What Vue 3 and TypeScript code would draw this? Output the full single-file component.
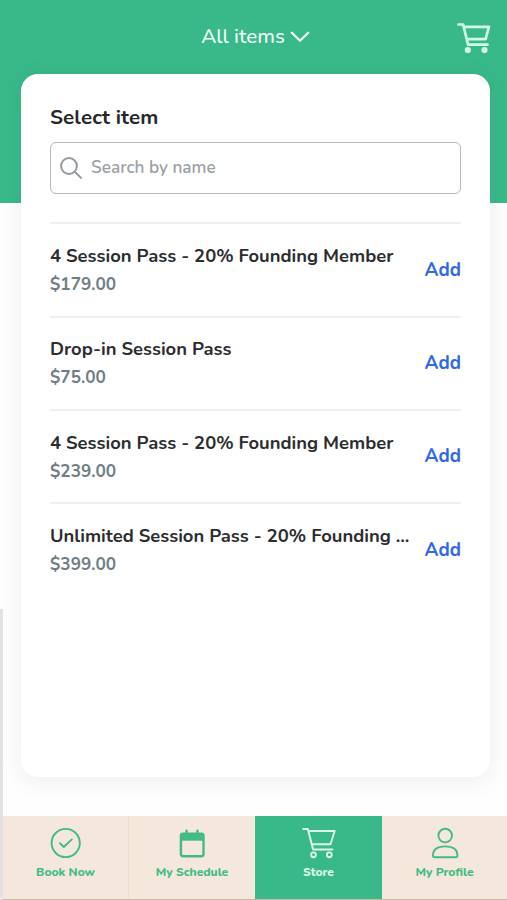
<script setup lang="ts">
import { ref, computed } from 'vue'

interface Item {
  id: number
  name: string
  price: number
}

type TabId = 'book' | 'schedule' | 'store' | 'profile'

const query = ref('')
const activeTab = ref<TabId>('store')

const items: Item[] = [
  { id: 1, name: '4 Session Pass - 20% Founding Member', price: 179 },
  { id: 2, name: 'Drop-in Session Pass', price: 75 },
  { id: 3, name: '4 Session Pass - 20% Founding Member', price: 239 },
  { id: 4, name: 'Unlimited Session Pass - 20% Founding Member', price: 399 },
]

const MAX_NAME = 38

function shorten(name: string): string {
  return name.length > MAX_NAME ? name.slice(0, MAX_NAME) + '...' : name
}

const tabs: { id: TabId; label: string }[] = [
  { id: 'book', label: 'Book Now' },
  { id: 'schedule', label: 'My Schedule' },
  { id: 'store', label: 'Store' },
  { id: 'profile', label: 'My Profile' },
]

const visibleItems = computed(() =>
  items.filter((i) => i.name.toLowerCase().includes(query.value.toLowerCase())),
)
</script>

<template>
  <div class="screen">
    <header class="header">
      <button class="filter">
        <span>All items</span>
        <svg class="chevron" viewBox="0 0 20 12">
          <path d="M1.8 1.8l8.2 8 8.2-8" />
        </svg>
      </button>
      <button class="cart" aria-label="Cart">
        <svg viewBox="0 0 34 32">
          <path d="M1.5 2.5h4.6l5 20.2h19.4M6.9 4.9h25L28.6 17.2H9.8" />
          <circle class="wheel" cx="10.8" cy="28" r="3.1" />
          <circle class="wheel" cx="27.5" cy="28" r="3.1" />
        </svg>
      </button>
    </header>

    <main class="card">
      <h1 class="title">Select item</h1>
      <label class="search">
        <svg viewBox="0 0 22 22">
          <circle cx="9" cy="9" r="7.9" />
          <path d="M14.8 14.8l6.2 6.1" />
        </svg>
        <input v-model="query" type="text" placeholder="Search by name" />
      </label>
      <ul class="list">
        <li v-for="item in visibleItems" :key="item.id" class="row">
          <div class="info">
            <div class="name">{{ shorten(item.name) }}</div>
            <div class="price">${{ item.price.toFixed(2) }}</div>
          </div>
          <button class="add">Add</button>
        </li>
      </ul>
    </main>

    <nav class="tabs">
      <button
        v-for="tab in tabs"
        :key="tab.id"
        :class="['tab', tab.id, { active: tab.id === activeTab }]"
        @click="activeTab = tab.id"
      >
        <svg v-if="tab.id === 'book'" viewBox="0 0 34 32">
          <circle cx="16.7" cy="16" r="14.1" />
          <path d="M10.9 16.2l3.9 3.8 8-7.6" />
        </svg>
        <svg v-else-if="tab.id === 'schedule'" viewBox="0 0 34 32">
          <rect x="5.9" y="6.6" width="22.6" height="22.7" rx="2.2" />
          <path class="solid" d="M5.9 6h22.6v7.7H5.9z" />
          <path d="M11.6 3.6v4M22.4 3.6v4" />
        </svg>
        <svg v-else-if="tab.id === 'store'" viewBox="0 0 34 32">
          <path d="M1.2 2h4.6l5.3 20.5h19.4M6.7 4h26l-4.2 13.2H10" />
          <circle cx="11.5" cy="27.8" r="2.4" />
          <circle cx="27.3" cy="27.8" r="2.4" />
        </svg>
        <svg v-else viewBox="0 0 34 32">
          <circle cx="17.2" cy="8.6" r="6.8" />
          <path d="M4.9 28.8c0-6 4.4-9.4 12.3-9.4s12.3 3.4 12.3 9.4c0 .9-.5 1.4-1.4 1.4H6.3c-.9 0-1.4-.5-1.4-1.4z" />
        </svg>
        <span>{{ tab.label }}</span>
      </button>
    </nav>
    <div class="edge"></div>
  </div>
</template>

<style>
body {
  margin: 0;
  background: #fff;
}
</style>

<style scoped>
.screen {
  position: relative;
  display: flex;
  flex-direction: column;
  width: 507px;
  height: 900px;
  overflow: hidden;
  background: #fefefe;
  font-family: Nunito, Lato, 'Open Sans', sans-serif;
}
button {
  padding: 0;
  border: 0;
  background: none;
  font-family: inherit;
  cursor: pointer;
}
svg {
  fill: none;
  stroke: currentColor;
  stroke-linecap: round;
  stroke-linejoin: round;
}
.header {
  flex: none;
  display: grid;
  grid-template-columns: 1fr auto 1fr;
  align-items: start;
  box-sizing: border-box;
  height: 203px;
  padding: 21px 16px 0 20px;
  background: #39b98a;
  color: #effff6;
}
.filter {
  grid-column: 2;
  display: flex;
  align-items: center;
  gap: 5px;
  color: inherit;
  font-size: 20.6px;
  font-weight: 500;
  line-height: 30px;
}
.chevron {
  width: 20px;
  height: 12px;
  margin-top: 1px;
  stroke-width: 2.3;
}
.cart {
  justify-self: end;
  width: 34px;
  height: 32px;
  margin-top: 1px;
  color: #d2fae4;
}
.cart svg {
  display: block;
  stroke-width: 2.7;
}
.cart .wheel {
  fill: currentColor;
  stroke: none;
}
.card {
  flex: none;
  box-sizing: border-box;
  height: 703px;
  margin: -129px 17px 39px 20.5px;
  padding: 29px 29px 0 29.5px;
  border-radius: 17px;
  background: #fff;
  box-shadow: 0 4px 24px rgba(40, 40, 60, 0.08);
}
.title {
  margin: 0 0 11px;
  color: #25272a;
  font-size: 20.6px;
  font-weight: 700;
  line-height: 28px;
  letter-spacing: 0.1px;
}
.search {
  display: flex;
  align-items: center;
  gap: 9.5px;
  box-sizing: border-box;
  height: 52px;
  padding: 0 8.5px;
  border: 1.5px solid #b4b9ba;
  border-radius: 6px;
}
.search svg {
  flex: none;
  width: 22px;
  height: 22px;
  color: #929a9d;
  stroke-width: 2;
}
.search input {
  flex: 1;
  min-width: 0;
  padding: 0;
  border: 0;
  outline: 0;
  background: none;
  color: #25272a;
  font: 600 17.2px/24px Nunito, Lato, 'Open Sans', sans-serif;
}
.search input::placeholder {
  color: #9aa1a4;
  opacity: 1;
}
.list {
  margin: 28.4px 0 0;
  padding: 0;
  list-style: none;
}
.row {
  display: flex;
  align-items: center;
  gap: 10px;
  box-sizing: border-box;
  height: 93.33px;
  border-top: 2px solid #eeeff0;
}
.info {
  flex: 1;
  min-width: 0;
}
.name {
  color: #2b2d2f;
  font-size: 18.4px;
  font-weight: 700;
  line-height: 29px;
  white-space: nowrap;
}
.price {
  color: #6f7e86;
  font-size: 17.2px;
  font-weight: 700;
  line-height: 29px;
}
.add {
  padding-bottom: 1px;
  color: #2f68e8;
  font-size: 18.8px;
  font-weight: 700;
}
.tabs {
  flex: none;
  display: grid;
  grid-template-columns: 126px 126px 127px 1fr;
  box-sizing: border-box;
  height: 84px;
  padding-left: 3px;
  border-bottom: 1px solid #c9b9aa;
  background: #f4e7db;
}
.tab {
  display: flex;
  flex-direction: column;
  align-items: center;
  padding-top: 11px;
  color: #43bb84;
  font-size: 12px;
  font-weight: 800;
  line-height: 16px;
}
.tab svg {
  width: 34px;
  height: 32px;
  margin-bottom: 5px;
  stroke-width: 1.9;
}
.tab.schedule svg {
  stroke-width: 2.4;
}
.tab.book {
  border-right: 1px solid #ece0d2;
}
.tab .solid {
  fill: currentColor;
  stroke: none;
}
.tab.active {
  background: #39b98a;
  color: #dcf9e8;
}
.edge {
  position: absolute;
  bottom: 0;
  left: 0;
  width: 3px;
  height: 291px;
  background: #e2e2e2;
}
</style>
